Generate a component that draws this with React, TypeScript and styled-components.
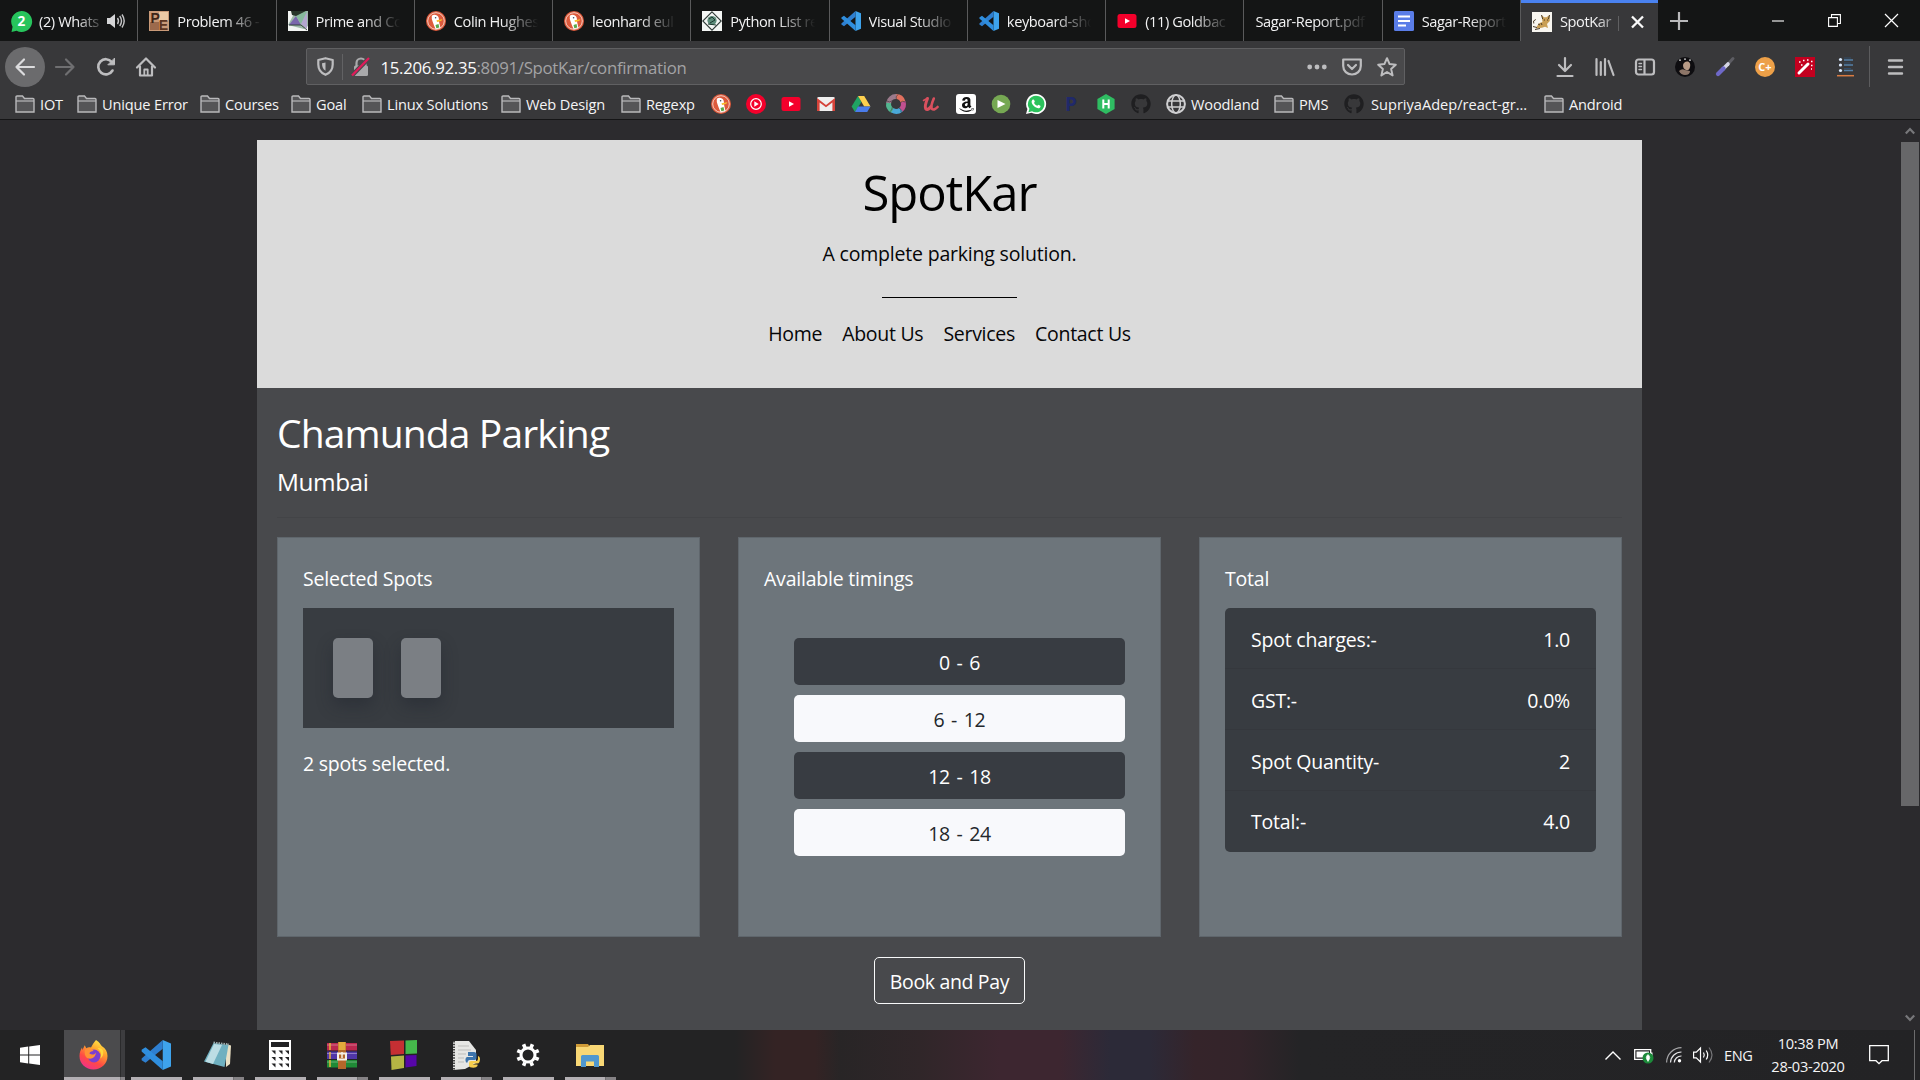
import React from "react";
import styled, { createGlobalStyle, css } from "styled-components";
import { FaGithub, FaAmazon } from "react-icons/fa";

const GlobalStyle = createGlobalStyle`
  *, *::before, *::after { box-sizing: border-box; }
  body { margin: 0; background: #2c2b2e; font-family: "Open Sans", "Noto Sans", sans-serif; overflow: hidden; }
  svg { display: block; flex: none; overflow: visible; }
  h1, h2, h3, h4, p { margin: 0; font-weight: 400; }
`;

const Screen = styled.div`
  width: 1920px;
  height: 1080px;
  display: flex;
  flex-direction: column;
  overflow: hidden;
`;

/* ---------- browser tabs ---------- */
const TabStrip = styled.div`
  height: 41px;
  flex: none;
  display: flex;
  background: #141515;
`;

const TabBox = styled.div<{ $active?: boolean }>`
  width: 138.27px;
  flex: none;
  display: flex;
  align-items: center;
  padding: 1px 12px 0 11px;
  border-right: 1px solid #5a5a5b;
  ${(p) =>
    p.$active &&
    css`
      width: 137px;
      padding: 0 14px 1px 11px;
      background: #38383a;
      border-right: 0;
      border-top: 3px solid #4a82f0;
    `}
`;

const TabIcon = styled.span`
  width: 20px;
  margin-right: 8px;
  flex: none;
`;

const TabLabel = styled.span`
  flex: 1;
  min-width: 0;
  overflow: hidden;
  white-space: nowrap;
  font-size: 14.6px;
  letter-spacing: -0.4px;
  line-height: 24px;
  padding-bottom: 1px;
  color: #f2f2f3;
  mask-image: linear-gradient(to right, #000 55%, transparent 98%);
`;

const NewTab = styled.div`
  width: 42px;
  display: flex;
  align-items: center;
  justify-content: center;
`;

const WindowControls = styled.div`
  margin-left: auto;
  display: flex;
  align-items: center;
`;

const WindowButton = styled.span`
  width: 57px;
  height: 40px;
  display: flex;
  align-items: center;
  justify-content: center;
`;

/* ---------- browser toolbar ---------- */
const Toolbar = styled.div`
  height: 51px;
  flex: none;
  display: flex;
  align-items: center;
  background: #38383a;
`;

const NavButtons = styled.div`
  width: 306px;
  display: flex;
  align-items: center;
  gap: 0.4px;
  padding-left: 5px;
`;

const NavButton = styled.span<{ $filled?: boolean }>`
  width: 40px;
  height: 40px;
  border-radius: 50%;
  display: flex;
  align-items: center;
  justify-content: center;
  background: ${(p) => (p.$filled ? "#6b6b6d" : "transparent")};
`;

const UrlBar = styled.div`
  width: 1099px;
  height: 37px;
  display: flex;
  align-items: center;
  border: 1px solid #606062;
  border-radius: 2px;
  background: #49494b;
  padding: 0 7px 0 9px;
`;

const UrlSeparator = styled.span`
  width: 1px;
  height: 26px;
  margin: 0 8px 0 7px;
  background: #626264;
`;

const Url = styled.span`
  flex: 1;
  margin-left: 9.5px;
  padding-top: 2px;
  font-size: 16.8px;
  letter-spacing: -0.3px;
  color: #a3a3a5;
  b { font-weight: 400; color: #fafafa; }
`;

const UrlActions = styled.span`
  display: flex;
  align-items: center;
  gap: 15px;
`;

const Extensions = styled.div`
  display: flex;
  align-items: center;
  padding-left: 140px;
`;

const ExtensionSlot = styled.span`
  width: 40px;
  display: flex;
  justify-content: center;
`;

const ToolbarDivider = styled.span`
  width: 1px;
  height: 41px;
  margin: 0 11px 0 4px;
  background: #5c5c5e;
`;

/* ---------- bookmarks ---------- */
const Bookmarks = styled.div`
  height: 28px;
  flex: none;
  display: flex;
  align-items: center;
  gap: 15px;
  padding: 0 0 3px 15px;
  background: #38383a;
  border-bottom: 1px solid #151516;
`;

const Bookmark = styled.span`
  display: flex;
  align-items: center;
  gap: 5px;
`;

const BookmarkLabel = styled.span<{ $w: number; $wide?: boolean }>`
  width: ${(p) => p.$w}px;
  padding-left: ${(p) => (p.$wide ? 2 : 0)}px;
  white-space: nowrap;
  font-size: 14.6px;
  letter-spacing: ${(p) => (p.$wide ? 0 : -0.17)}px;
  line-height: 24px;
  padding-bottom: 1px;
  color: #f4f4f5;
`;

const Glyph = styled.span<{ $bg?: string; $fg?: string; $round?: string; $size?: number }>`
  width: 20px;
  height: 20px;
  display: flex;
  align-items: center;
  justify-content: center;
  border-radius: ${(p) => p.$round ?? "0"};
  background: ${(p) => p.$bg ?? "transparent"};
  color: ${(p) => p.$fg ?? "#fff"};
  font: 700 ${(p) => p.$size ?? 14}px/20px "Open Sans", sans-serif;
`;

/* ---------- page ---------- */
const Viewport = styled.div`
  height: 910px;
  flex: none;
  display: flex;
  background: #2c2b2e;
`;

const PageArea = styled.div`
  width: 1900px;
  padding: 20px 0 0 257px;
  overflow: hidden;
`;

const Container = styled.div`
  width: 1385px;
  height: 890px;
  background: #48494c;
`;

const Header = styled.header`
  height: 248px;
  background: #dbdbdb;
  color: #060608;
  display: flex;
  flex-direction: column;
  align-items: center;
  padding-top: 22px;
`;

const BrandTitle = styled.h1`
  font-size: 49px;
  line-height: 60px;
  letter-spacing: -1px;
  color: #000;
`;

const Tagline = styled.p`
  margin-top: 17px;
  font-size: 19.5px;
  line-height: 30px;
  letter-spacing: -0.2px;
`;

const ShortRule = styled.div`
  width: 135px;
  height: 1px;
  margin-top: 28px;
  background: #000;
`;

const Menu = styled.nav`
  display: flex;
  gap: 20px;
  margin-top: 21px;
  font-size: 19.5px;
  line-height: 30px;
  letter-spacing: -0.28px;
`;

const Content = styled.main`
  padding: 21px 20px 0;
  color: #fff;
`;

const PlaceName = styled.h2`
  font-size: 39px;
  line-height: 48px;
  letter-spacing: -0.88px;
`;

const City = styled.h4`
  margin-top: 10px;
  font-size: 24.4px;
  line-height: 30px;
  letter-spacing: -0.45px;
`;

const Rule = styled.div`
  height: 1px;
  margin: 20px 0 19px;
  background: #434447;
`;

const Cards = styled.div`
  display: flex;
  justify-content: space-between;
`;

const Card = styled.section`
  width: 423px;
  height: 400px;
  padding: 26px 25px 0;
  border: 1px solid #5f666c;
  background: #6d757b;
  font-size: 19.5px;
  line-height: 30px;
  letter-spacing: -0.22px;
`;

const CardTitle = styled.h3`
  font-size: inherit;
  margin-bottom: 14px;
`;

const SpotTray = styled.div`
  height: 120px;
  display: flex;
  gap: 28px;
  padding: 30px;
  margin-bottom: 21px;
  background: #383c41;
`;

const Spot = styled.span`
  width: 40px;
  height: 60px;
  border-radius: 5px;
  background: #7b7f84;
  box-shadow: 0 8px 16px rgba(30, 34, 44, 0.4);
`;

const Timings = styled.div`
  display: flex;
  flex-direction: column;
  gap: 10px;
  padding: 30px 10px 30px 30px;
`;

const Timing = styled.div<{ $light?: boolean }>`
  height: 47px;
  padding-top: 2px;
  display: flex;
  align-items: center;
  justify-content: center;
  border-radius: 5px;
  background: ${(p) => (p.$light ? "#f8f9fc" : "#383c42")};
  color: ${(p) => (p.$light ? "#23272b" : "#fff")};
  word-spacing: 2px;
  letter-spacing: -0.35px;
`;

const Bill = styled.div`
  border-radius: 5px;
  overflow: hidden;
  background: #383c41;
`;

const BillRow = styled.div`
  height: 61px;
  display: flex;
  align-items: center;
  justify-content: space-between;
  padding: 3px 26px 0;
  border-bottom: 1px solid #35383d;
  &:last-child { border-bottom: 0; padding-top: 0; }
`;

const PayRow = styled.div`
  display: flex;
  justify-content: center;
  padding-top: 20px;
`;

const PayButton = styled.div`
  width: 151px;
  height: 47px;
  padding-top: 2px;
  display: flex;
  align-items: center;
  justify-content: center;
  border: 1px solid #f8f9fa;
  border-radius: 5px;
  font-size: 19.5px;
  letter-spacing: -0.35px;
`;

const Scrollbar = styled.div`
  width: 20px;
  display: flex;
  flex-direction: column;
  align-items: center;
  background: #2b2a2d;
`;

const ScrollArrow = styled.span`
  height: 22px;
  display: flex;
  align-items: center;
  &:last-child { height: 24px; }
`;

const ScrollThumb = styled.span`
  width: 18px;
  height: 664px;
  margin: 0 1px auto 0;
  background: #676769;
`;

/* ---------- taskbar ---------- */
const Taskbar = styled.div`
  height: 50px;
  flex: none;
  display: flex;
  background: linear-gradient(
    to right,
    #232324 0, #232324 735px, #342324 775px, #342324 815px, #282526 840px,
    #302629 920px, #3d2630 1000px, #3d2630 1060px, #2c2a38 1110px, #2c2a38 1150px,
    #35242a 1195px, #33242a 1240px, #242426 1300px, #232325 1920px
  );
`;

const StartButton = styled.span`
  width: 64px;
  display: flex;
  align-items: center;
  padding-left: 20px;
`;

const Task = styled.span<{ $active?: boolean; $stack?: boolean }>`
  width: ${(p) => (p.$active ? 61 : 51)}px;
  margin-right: ${(p) => (p.$active ? 6 : 11)}px;
  display: flex;
  flex-direction: column;
  align-items: center;
  justify-content: space-between;
  padding-top: 9px;
  background: ${(p) => (p.$active ? "linear-gradient(to right, #4b4b4d 56px, #2b2b2c 56px, #2b2b2c 57px, #3d3d3f 57px)" : "none")};
  &::after {
    content: "";
    width: 100%;
    height: 3px;
    background: ${(p) =>
      p.$active
        ? "linear-gradient(to right, #b3afb3 56px, #5e5c5e 56px, #8a878a 57px)"
        : p.$stack
          ? "linear-gradient(to right, #b3afb3 40px, #5e5c5e 40px, #858285 41px)"
          : "#b3afb3"};
  }
`;

const TaskIcon = styled.span`
  height: 32px;
  margin-right: 2px;
  display: flex;
  align-items: center;
`;

const Tray = styled.div`
  margin-left: auto;
  display: flex;
  align-items: center;
  color: #f5f5f6;
`;

const TraySlot = styled.span<{ $w: number }>`
  width: ${(p) => p.$w}px;
  display: flex;
  justify-content: center;
`;

const Language = styled.span`
  width: 30px;
  margin: 0 14px 0 7px;
  font-size: 14.6px;
  letter-spacing: -0.45px;
`;

const Clock = styled.div`
  width: 80px;
  display: flex;
  flex-direction: column;
  align-items: center;
  font-size: 14.6px;
  letter-spacing: -0.28px;
  line-height: 23px;
  white-space: nowrap;
`;

const ShowDesktop = styled.span`
  width: 6px;
  height: 50px;
  margin-left: 5px;
  border-left: 1px solid #6b6b6c;
`;

/* ---------- drawings ---------- */
const stroke = { fill: "none", stroke: "#bdbdbf", strokeWidth: 2.2, strokeLinecap: "round" as const, strokeLinejoin: "round" as const };

const Folder = () => (
  <svg width="20" height="20" viewBox="0 0 20 20">
    <path d="M1 18V3q0-1 1-1h5.500l2 2.500H18q1 0 1 1V18z" fill="#555557" stroke="#b9b9bb" strokeWidth="1.400" />
    <path d="M1 7h18" stroke="#b9b9bb" strokeWidth="1.200" />
  </svg>
);

const Duck = () => (
  <svg width="20" height="20" viewBox="0 0 20 20">
    <circle cx="10" cy="10" r="10" fill="#dd5a3c" />
    <circle cx="10" cy="10" r="8.300" fill="none" stroke="#f6d9cf" strokeWidth=".9" />
    <path d="M5.800 4.800c2-1.800 5.800-1 6.800 1.600.6 1.600.2 3.200.6 5.200l1.300 5.400-4.800 1.200C8 14.800 6.600 10.500 5.800 8z" fill="#fff" />
    <path d="M10.500 9.200l5.500-1c.8.7-.4 1.900-5 2.700z" fill="#f9bf2d" />
    <path d="M9.500 14l3-1 .8 3.500-3 .7z" fill="#5aa84a" />
    <circle cx="9.600" cy="6.800" r=".8" fill="#3b4a66" />
  </svg>
);

const YouTube = () => (
  <svg width="20" height="20" viewBox="0 0 20 20">
    <rect x="0.500" y="3" width="19" height="14" rx="2.500" fill="#f4002b" />
    <path d="M8 7.200v5.600l5-2.800z" fill="#fff" />
  </svg>
);

const YouTubeMusic = () => (
  <svg width="20" height="20" viewBox="0 0 20 20">
    <circle cx="10" cy="10" r="10" fill="#f4002b" />
    <circle cx="10" cy="10" r="5.300" fill="none" stroke="#fff" strokeWidth="1.200" />
    <path d="M8.300 7.300v5.400l4.400-2.700z" fill="#fff" />
  </svg>
);

const Gmail = () => (
  <svg width="20" height="20" viewBox="0 0 20 20">
    <rect x="1" y="3" width="18" height="14" rx="1.500" fill="#efefef" />
    <path d="M1 17V4l9 7 9-7v13h-2.600V8.500L10 13.300 3.600 8.500V17z" fill="#d5433a" />
  </svg>
);

const Drive = () => (
  <svg width="20" height="20" viewBox="0 0 20 20">
    <path d="M7 2l3.400 6L4 18 .6 12.500z" fill="#1fa463" />
    <path d="M7 2h6.200l6.300 10.500h-6.300z" fill="#fdd04f" />
    <path d="M7 12.500h12.500L16.200 18H4z" fill="#4a7cea" />
  </svg>
);

const Swirl = () => (
  <svg width="20" height="20" viewBox="0 0 20 20" fill="none" strokeWidth="5">
    <path d="M10 2.600A7.400 7.400 0 0 1 17 8" stroke="#e0705e" />
    <path d="M17 7.700a7.400 7.400 0 0 1-2.400 8.200" stroke="#c0508f" />
    <path d="M15 15.600a7.400 7.400 0 0 1-8.800.6" stroke="#4aa8d8" />
    <path d="M6.500 16.500A7.400 7.400 0 0 1 2.700 8.600" stroke="#52b690" />
    <path d="M2.600 9A7.400 7.400 0 0 1 10.300 2.600" stroke="#9c7a8c" />
    <path d="M12 .5q-3 2-1.500 5.500M19 8q-3-2-5 1M15 18q1-3-2-4M4 17.500q2.500-1 2.200-4.200M1 7q3 2 4.800-.2" stroke="#38383a" strokeWidth=".6" />
  </svg>
);

const Udemy = () => (
  <svg width="20" height="20" viewBox="0 0 20 20" fill="none" stroke="#d9505e" strokeLinecap="round" strokeLinejoin="round">
    <path d="M6.500 4.500Q3.500 12 4.600 14.500 6.500 17 10 12.500" strokeWidth="3" />
    <path d="M12.800 4.500Q9.600 12 10.600 14.500q2.400 2.500 6-1.500" strokeWidth="2.600" />
    <path d="M2.500 6.500L6 4.300" strokeWidth="1.500" />
  </svg>
);

const PlayStore = () => (
  <svg width="20" height="20" viewBox="0 0 20 20">
    <circle cx="10" cy="10" r="9.300" fill="#76a853" />
    <path d="M6.500 6v8l8-4z" fill="#fff" />
  </svg>
);

const WhatsApp = () => (
  <svg width="20" height="20" viewBox="0 0 20 20">
    <path d="M10 0a10 10 0 1 1-4.600 18.800L0 20l1.400-5A10 10 0 0 1 10 0z" fill="#fff" />
    <path d="M10 1.700a8.300 8.300 0 1 1-4 15.500l-3.600 1 1-3.500A8.300 8.300 0 0 1 10 1.700z" fill="#2bc25c" />
    <path d="M7 5.500c.5-.2 1 0 1.100.4l.7 1.600c.1.500-.7 1-.7 1.400.7 1.400 1.700 2.300 3.100 2.800.5.100.9-.9 1.300-.9l1.800.9c.5.300.1 1.700-.7 2.200-1.200.7-3 .2-4.600-.8C7 11.500 5.700 9.600 5.600 8c0-1.200.6-2.200 1.400-2.500z" fill="#fff" />
  </svg>
);

const WhatsAppUnread = () => (
  <svg width="21" height="21" viewBox="0 0 20 20">
    <path d="M10 0a10 10 0 1 1-4.600 18.800L.5 20l1-5A10 10 0 0 1 10 0z" fill="#27c45c" />
    <text x="10" y="14.600" textAnchor="middle" fontSize="13" fontWeight="700" fill="#fff" fontFamily="Open Sans">2</text>
  </svg>
);

const HackerRank = () => (
  <svg width="20" height="20" viewBox="0 0 20 20">
    <path d="M10 0l8.600 5v10L10 20l-8.600-5V5z" fill="#2fbd62" />
    <path d="M7.300 5.500v9M12.700 5.500v9M7.300 10h5.400" stroke="#fff" strokeWidth="2" />
  </svg>
);

const Globe = () => (
  <svg width="20" height="20" viewBox="0 0 20 20" fill="none" stroke="#cfcfd1" strokeWidth="1.500">
    <circle cx="10" cy="10" r="8.900" strokeWidth="2" />
    <ellipse cx="10" cy="10" rx="4.300" ry="8.900" />
    <path d="M1.500 7h17M1.500 13h17" />
  </svg>
);

const VsCode = ({ size = 20 }: { size?: number }) => (
  <svg width={size} height={size} viewBox="0 0 20 20">
    <path d="M14.500 0L20 2.300v15.400L14.500 20z" fill="#3ea3ec" />
    <path d="M14.500 0v5.800L3 15.200.4 13.500v-1.100z" fill="#2e7fd0" />
    <path d="M14.500 20v-5.800L3 4.800.4 6.500v1.100z" fill="#2f8ede" />
  </svg>
);

const Euler = () => (
  <svg width="20" height="20" viewBox="0 0 20 20">
    <rect width="20" height="20" fill="#c99a78" />
    <rect x="10" y="1" width="9" height="9" fill="#ecc9a4" />
    <rect x="1" y="11" width="9" height="8" fill="#9c6a4c" />
    <text x="1.500" y="12" fontSize="14" fontWeight="700" fill="#3c2418" fontFamily="Liberation Sans">P</text>
    <text x="9.800" y="18.500" fontSize="14" fontWeight="700" fill="#5c3420" fontFamily="Liberation Sans">E</text>
  </svg>
);

const Polygon = () => (
  <svg width="20" height="20" viewBox="0 0 20 20">
    <rect width="20" height="20" fill="#f2f4f2" />
    <path d="M0 14L7 1l13-1v15l-4 3z" fill="#9db8a8" />
    <path d="M1 14L8 5l5 9z" fill="#7a66ac" />
    <path d="M8 5l11-5-6 13z" fill="#86b99c" />
    <path d="M13 13l6-12v17z" fill="#b3a6cf" />
    <path d="M3 0h15L8 5 4 4z" fill="#28362a" />
    <path d="M1 14h12l6 5" stroke="#2e3a34" fill="none" strokeWidth=".9" />
  </svg>
);

const PythonDiamond = () => (
  <svg width="20" height="20" viewBox="0 0 20 20">
    <rect width="20" height="20" fill="#f4f6f4" />
    <path d="M10 .8L19.200 10 10 19.200.8 10z" fill="none" stroke="#2f3a36" strokeWidth="1.100" />
    <circle cx="10" cy="9.500" r="4.600" fill="#5d8c7a" />
    <path d="M7 8l3-2 3 3-5 3M6 13l8 1" stroke="#1d3a30" fill="none" />
  </svg>
);

const Docs = () => (
  <svg width="20" height="20" viewBox="0 0 20 20">
    <rect width="20" height="20" rx="1.500" fill="#5a7de8" />
    <path d="M4 5.500h12M4 10h12M4 14.600h8" stroke="#fff" strokeWidth="2" />
  </svg>
);

const Tomcat = () => (
  <svg width="20" height="20" viewBox="0 0 20 20">
    <rect width="20" height="20" fill="#f8f6f0" />
    <path d="M9.500 3l2.500 2.300h2.500L17.500 3l.3 6-2.800 3 1 4-3-1.200-3 .9-6 .8 1.500-3 2-2.500 3-1z" fill="#c99f55" />
    <path d="M1.800 11.500q-1.500-3 2-4M1 14.500l4 1M11.800 8h1.200M15 8h1.200M9.500 3l1.200 4M3 17.500l5-1M17.500 3l-1 4M6 12l2 1M9 11l1 2" stroke="#4a3b28" fill="none" strokeWidth="1" />
  </svg>
);

const Audio = () => (
  <svg width="18" height="16" viewBox="0 0 18 16">
    <path d="M0 5h3l5-4v14l-5-4H0z" fill="#d5d5d7" />
    <path d="M10.500 5q2 3 0 6M12.700 3q3.600 5 0 10M15 1.500q4.400 6.500 0 13" fill="none" stroke="#c4c4c6" strokeWidth="1.400" />
  </svg>
);

const Firefox = () => (
  <svg width="29" height="30" viewBox="0 0 29 30">
    <defs>
      <linearGradient id="ffBody" x1=".8" y1="0" x2=".3" y2="1">
        <stop offset="0" stopColor="#fff04a" /><stop offset=".35" stopColor="#ffa42c" />
        <stop offset=".7" stopColor="#ff4a45" /><stop offset="1" stopColor="#f0308c" />
      </linearGradient>
    </defs>
    <path d="M17 0c4 2.500 4.600 5 6 6.300 3.500 2 5.500 5.500 5.500 9.700C28.500 24 22 29.500 14.500 29.500S.500 24 .500 16c0-3.500 1.200-6.600 2.500-8.600L3.500 10l2.200-4.800 1.600 3c1.700-1 3-1 4.700-.6C13.500 4.500 15 2.500 17 0z" fill="url(#ffBody)" />
    <circle cx="15" cy="16" r="6.400" fill="#7b3fd0" />
    <path d="M6 9.500c4-1.800 6.500-.8 8.700 1.500-2.500.3-4 1-4.300 2.500 3 2 5.500 1 6.600-1-.5 5-4.500 7.500-9 5.500C6 16.500 5 13 6 9.500z" fill="#ff9135" />
    <path d="M18.500 8c3.500 3 4.500 7 2.700 10.500 2-1 3.500-3.500 3-7.500-1-2.500-3-3.500-5.700-3z" fill="#ffd93c" />
  </svg>
);

const Notepad = () => (
  <svg width="28" height="28" viewBox="0 0 28 28">
    <path d="M22 3l5 1.500-1 18.500-4 3z" fill="#e9e0c4" />
    <path d="M9.500 2L24.500 4l-4 22L0 20.500z" fill="#6fb0c0" />
    <path d="M10 3l8 1L9 23l-7.500-2.300z" fill="#bcdde4" />
    <path d="M9.500 1.600L25 3.400" stroke="#9fb0b2" strokeWidth="2" strokeDasharray="1.500 1" />
  </svg>
);

const Calculator = () => (
  <svg width="22" height="30" viewBox="0 0 22 30">
    <path d="M0 0h22v30H0z" fill="#fff" />
    <path d="M2 2h18v5H2z" fill="#222224" />
    {[10.5, 17, 23.5].map((y) => [2.5, 9.5, 16].map((x) => <path key={`${x}-${y}`} d={`M${x} ${y}h4v4z`} fill="#222224" />))}
  </svg>
);

const WinRar = () => (
  <svg width="30" height="27" viewBox="0 0 30 27">
    <path d="M0 1h30v7.500H0z" fill="#b9284f" /><path d="M0 9.500h30V17H0z" fill="#5036a8" /><path d="M0 18h30v7.500H0z" fill="#1f8a36" />
    <path d="M0 3h30M0 11.500h30M0 20h30" stroke="#fff" strokeOpacity=".35" />
    <path d="M3 1v7M3 10v7M3 18v7" stroke="#e8b53b" strokeWidth="1.500" />
    <path d="M11 0h8v27h-8z" fill="#b4672a" /><path d="M11.500 0h7v8h-7z" fill="#e3aa3c" />
    <path d="M11 11.500h8v6h-8z" fill="none" stroke="#f4f0e8" strokeWidth="2" /><path d="M15 10v6" stroke="#f4f0e8" strokeWidth="1.500" />
  </svg>
);

const FourColors = () => (
  <svg width="27" height="30" viewBox="0 0 27 30">
    <path d="M0 1l14-.5V14L.8 15z" fill="#c62f33" /><path d="M15.500.5L27 0v13.500l-11.500.5z" fill="#45b84b" />
    <path d="M1 16.500l13-1V28L1.500 30z" fill="#b5b544" /><path d="M15.500 15.500L26.500 15v11l-11 1.500z" fill="#5706a8" />
  </svg>
);

const PythonFile = () => (
  <svg width="28" height="29" viewBox="0 0 28 29">
    <path d="M1 0h16l7 9v13L13 28 1 29z" fill="#e6e6e4" />
    <path d="M2 0v29" stroke="#444" strokeWidth="2" strokeDasharray="1.500 1.200" />
    <path d="M6 5h11M6 9h13M6 13h8M6 17h6M6 21h6" stroke="#bdbdbb" />
    <path d="M16 11h6q2.500 0 2.500 2.500V17q0 2-2 2h-5q-2 0-2 2.500H14q-1.500-4.500 1-5.500h6v-1h-5z" fill="#3d74ab" />
    <path d="M26 15q3 1 1.500 6-.6 1.500-2.500 1.500h-4v1h4.500V25q-1 1.800-4 1.800-4.500 0-4.500-2.500V22q0-2 2-2h5q2 0 2-2z" fill="#f8cf4e" />
  </svg>
);

const Gear = () => (
  <svg width="24" height="24" viewBox="0 0 24 24" fill="none" stroke="#fff">
    <circle cx="12" cy="12" r="7" strokeWidth="3" />
    {[22.5, 67.5, 112.5, 157.5, 202.5, 247.5, 292.5, 337.5].map((a) => (
      <path key={a} d="M12 4V.4" strokeWidth="3.600" transform={`rotate(${a} 12 12)`} />
    ))}
  </svg>
);

const Explorer = () => (
  <svg width="28" height="24" viewBox="0 0 28 24">
    <path d="M0 1h12l2 3v4H0z" fill="#cf9b38" />
    <path d="M0 4h12l2-2h14v21H0z" fill="#f8d775" />
    <path d="M5 24V13.500Q5 12 6.500 12h15q1.500 0 1.500 1.500V24h-5v-5.500h-8V24z" fill="#4f97cf" />
  </svg>
);

/* ---------- data ---------- */
const tabs: { label: string; icon?: React.ReactNode; audio?: boolean }[] = [
  { label: "(2) Whats", icon: <WhatsAppUnread />, audio: true },
  { label: "Problem 46 -", icon: <Euler /> },
  { label: "Prime and Co", icon: <Polygon /> },
  { label: "Colin Hughes", icon: <Duck /> },
  { label: "leonhard eul", icon: <Duck /> },
  { label: "Python List re", icon: <PythonDiamond /> },
  { label: "Visual Studio", icon: <VsCode /> },
  { label: "keyboard-sho", icon: <VsCode /> },
  { label: "(11) Goldbac", icon: <YouTube /> },
  { label: "Sagar-Report.pdf" },
  { label: "Sagar-Report", icon: <Docs /> },
];

const bookmarks: { icon: React.ReactNode; label?: string; w?: number; wide?: boolean }[] = [
  { icon: <Folder />, label: "IOT", w: 22 },
  { icon: <Folder />, label: "Unique Error", w: 83 },
  { icon: <Folder />, label: "Courses", w: 51 },
  { icon: <Folder />, label: "Goal", w: 31 },
  { icon: <Folder />, label: "Linux Solutions", w: 99 },
  { icon: <Folder />, label: "Web Design", w: 80 },
  { icon: <Folder />, label: "Regexp", w: 50 },
  { icon: <Duck /> },
  { icon: <YouTubeMusic /> },
  { icon: <YouTube /> },
  { icon: <Gmail /> },
  { icon: <Drive /> },
  { icon: <Swirl /> },
  { icon: <Udemy /> },
  { icon: <Glyph $bg="#fff" $fg="#111" $round="3px"><FaAmazon size={17} /></Glyph> },
  { icon: <PlayStore /> },
  { icon: <WhatsApp /> },
  { icon: <Glyph $fg="#20296a" $size={19}>P</Glyph> },
  { icon: <HackerRank /> },
  { icon: <FaGithub size={20} color="#1f1f21" /> },
  { icon: <Globe />, label: "Woodland", w: 68 },
  { icon: <Folder />, label: "PMS", w: 30 },
  { icon: <FaGithub size={20} color="#1f1f21" />, label: "SupriyaAdep/react-gr...", w: 160, wide: true },
  { icon: <Folder />, label: "Android", w: 53 },
];

const timings = ["0 - 6", "6 - 12", "12 - 18", "18 - 24"];
const bill = [
  ["Spot charges:-", "1.0"],
  ["GST:-", "0.0%"],
  ["Spot Quantity-", "2"],
  ["Total:-", "4.0"],
];
const tasks = [
  { icon: <Firefox />, active: true },
  { icon: <VsCode size={30} /> },
  { icon: <Notepad />, stack: true },
  { icon: <Calculator /> },
  { icon: <WinRar />, stack: true },
  { icon: <FourColors /> },
  { icon: <PythonFile />, stack: true },
  { icon: <Gear /> },
  { icon: <Explorer />, stack: true },
];

export default function App() {
  return (
    <Screen>
      <GlobalStyle />
      <TabStrip>
        {tabs.map((t) => (
          <TabBox key={t.label}>
            {t.icon && <TabIcon>{t.icon}</TabIcon>}
            <TabLabel>{t.label}</TabLabel>
            {t.audio && <Audio />}
          </TabBox>
        ))}
        <TabBox $active>
          <TabIcon><Tomcat /></TabIcon>
          <TabLabel>SpotKar |</TabLabel>
          <svg width="18" height="14" viewBox="0 0 18 14"><path d="M6 1.500l11 11M17 1.500l-11 11" stroke="#fafafa" strokeWidth="2.300" /></svg>
        </TabBox>
        <NewTab>
          <svg width="18" height="18" viewBox="0 0 18 18"><path d="M9 0v18M0 9h18" stroke="#b9b9bb" strokeWidth="2.200" /></svg>
        </NewTab>
        <WindowControls>
          <WindowButton><svg width="12" height="12" viewBox="0 0 12 12"><path d="M0 6h12" stroke="#fff" strokeWidth="1.100" /></svg></WindowButton>
          <WindowButton>
            <svg width="13" height="13" viewBox="0 0 13 13" fill="none" stroke="#fff" strokeWidth="1.100"><path d="M.6 3.600h8.800v8.800H.6zM3.500 3.600V.6h8.900v8.900h-3" /></svg>
          </WindowButton>
          <WindowButton><svg width="13" height="13" viewBox="0 0 13 13"><path d="M0 0l13 13M13 0L0 13" stroke="#fff" strokeWidth="1.200" /></svg></WindowButton>
        </WindowControls>
      </TabStrip>

      <Toolbar>
        <NavButtons>
          <NavButton $filled><svg width="20" height="20" viewBox="0 0 20 20" {...stroke} stroke="#dcdcde"><path d="M19 10H1.500M9 2.500L1.500 10 9 17.500" /></svg></NavButton>
          <NavButton><svg width="20" height="20" viewBox="0 0 20 20" {...stroke} stroke="#6f6f71"><path d="M1 10h17.500M11 2.500l7.500 7.500-7.500 7.500" /></svg></NavButton>
          <NavButton>
            <svg width="20" height="20" viewBox="0 0 20 20" {...stroke} strokeWidth="2.600"><path d="M16.500 13.500a7.600 7.600 0 1 1-.7-8.500" /><path d="M18.500 1.500v6.300h-6.300z" fill="#bdbdbf" strokeWidth="1" /></svg>
          </NavButton>
          <NavButton>
            <svg width="20" height="20" viewBox="0 0 20 20" {...stroke}><path d="M1 10.500L10 1.500l9 9M4 9.500v9h12v-9" /><path d="M8.300 18v-5.500h3.400V18" strokeWidth="1.800" /></svg>
          </NavButton>
        </NavButtons>
        <UrlBar>
          <svg width="19" height="19" viewBox="0 0 19 19" {...stroke}><path d="M9.500 1.200L2.300 3v4.500c0 5 2.700 8.500 7.200 10.300 4.500-1.800 7.200-5.300 7.200-10.300V3z" /><path d="M9.500 5.500v8.300C7 12.300 6 10 6 6.300z" fill="#bdbdbf" stroke="none" /></svg>
          <UrlSeparator />
          <svg width="20" height="20" viewBox="0 0 20 20"><path d="M5.500 9V6a4.500 4.500 0 0 1 9 0v3" fill="none" stroke="#a9a9ab" strokeWidth="2.200" /><rect x="3" y="8.500" width="14" height="10.500" rx="1.500" fill="#a9a9ab" /><path d="M1 18.500L18 1" stroke="#49494b" strokeWidth="4.500" /><path d="M1 18.500L18 1" stroke="#e01b5a" strokeWidth="2.300" /></svg>
          <Url><b>15.206.92.35</b>:8091/SpotKar/confirmation</Url>
          <UrlActions>
            <svg width="20" height="20" viewBox="0 0 20 20" fill="#bdbdbf"><circle cx="2.700" cy="10" r="2.400" /><circle cx="10" cy="10" r="2.400" /><circle cx="17.300" cy="10" r="2.400" /></svg>
            <svg width="20" height="20" viewBox="0 0 20 20" {...stroke}><path d="M1.200 2.500h17.600v6.500c0 5-4 8.500-8.800 8.500S1.200 14 1.200 9z" /><path d="M6 8l4 4 4-4" /></svg>
            <svg width="20" height="20" viewBox="0 0 20 20" {...stroke} strokeWidth="2"><path d="M10 1.200l2.600 5.900 6.200.6-4.700 4.200 1.500 6.500L10 15l-5.600 3.400 1.500-6.500L1.200 7.700l6.200-.6z" /></svg>
          </UrlActions>
        </UrlBar>
        <Extensions>
          <ExtensionSlot><svg width="18" height="20" viewBox="0 0 18 20" {...stroke}><path d="M9 1v12.500M3 8l6 6 6-6M1.500 19h15" /></svg></ExtensionSlot>
          <ExtensionSlot><svg width="20" height="18" viewBox="0 0 20 18" {...stroke}><path d="M1.500 1v16M5.800 4v13M10 1v16M13.500 3l5 14" /></svg></ExtensionSlot>
          <ExtensionSlot><svg width="20" height="18" viewBox="0 0 20 18" {...stroke}><rect x="1" y="1.500" width="18" height="15" rx="2.500" /><path d="M9.500 2v14" /><path d="M4 5.500h2.500M4 8.500h2.500M4 11.500h2.500" strokeWidth="1.400" /></svg></ExtensionSlot>
          <ExtensionSlot>
            <svg width="20" height="20" viewBox="0 0 20 20"><circle cx="10" cy="10" r="10" fill="#0e0d10" /><path d="M8 8q1-4 5-3.500 3 1 2 5.500-1 4-4 3-3-1-3-5z" fill="#b79a86" /><path d="M4 14q3-3 6-1l5 1q0 4-5 4-4 0-6-4z" fill="#8d7668" /><path d="M4 3.200h2M9 2.200h2M14 3.200h2" stroke="#ccc" strokeWidth="1.200" /></svg>
          </ExtensionSlot>
          <ExtensionSlot>
            <svg width="18" height="18" viewBox="0 0 18 18" strokeLinecap="round"><path d="M17 .5l-5 5.500" stroke="#5d5d63" strokeWidth="3" /><path d="M12 6L7 11" stroke="#d5d5e4" strokeWidth="3.600" /><path d="M7.500 10.500L2 16" stroke="#6e68c8" strokeWidth="4.200" /></svg>
          </ExtensionSlot>
          <ExtensionSlot><Glyph $bg="#eda048" $round="50%" $size={11}>C+</Glyph></ExtensionSlot>
          <ExtensionSlot>
            <svg width="20" height="20" viewBox="0 0 20 20"><path d="M0 0h20v20H0z" fill="#c3001f" /><path d="M4 16l9-9" stroke="#fff" strokeWidth="3" strokeLinecap="round" /><path d="M4 5h1.500M8 3.500h1.500M12 3h1.500M16 4.500h1.500M16 8.500h1.500M6 8h1.500M16 12h1" stroke="#fff" strokeWidth="1.300" /></svg>
          </ExtensionSlot>
          <ExtensionSlot>
            <svg width="17" height="20" viewBox="0 0 17 20"><path d="M7 3h9M7 8h9M7 13.500h9" stroke="#5480a8" strokeWidth="1.500" /><path d="M7 1h7M7 6h7M7 11.500h7" stroke="#304a66" /><circle cx="3.500" cy="2.500" r="1.600" fill="#dcebff" /><circle cx="3.500" cy="8" r="1.600" fill="#dcebff" /><circle cx="3.500" cy="13.500" r="1.600" fill="#dcebff" /><path d="M0 18.700h17" stroke="#d97b42" strokeWidth="1.500" /></svg>
          </ExtensionSlot>
          <ToolbarDivider />
          <svg width="30" height="18" viewBox="0 0 30 18" {...stroke} strokeWidth="2.400"><path d="M8 2.500h13M8 9h13M8 15.500h13" /></svg>
        </Extensions>
      </Toolbar>

      <Bookmarks>
        {bookmarks.map((b, i) => (
          <Bookmark key={i}>
            {b.icon}
            {b.label && <BookmarkLabel $w={b.w ?? 0} $wide={b.wide}>{b.label}</BookmarkLabel>}
          </Bookmark>
        ))}
      </Bookmarks>

      <Viewport>
        <PageArea>
          <Container>
            <Header>
              <BrandTitle>SpotKar</BrandTitle>
              <Tagline>A complete parking solution.</Tagline>
              <ShortRule />
              <Menu>
                <span>Home</span><span>About Us</span><span>Services</span><span>Contact Us</span>
              </Menu>
            </Header>
            <Content>
              <PlaceName>Chamunda Parking</PlaceName>
              <City>Mumbai</City>
              <Rule />
              <Cards>
                <Card>
                  <CardTitle>Selected Spots</CardTitle>
                  <SpotTray><Spot /><Spot /></SpotTray>
                  <p>2 spots selected.</p>
                </Card>
                <Card>
                  <CardTitle>Available timings</CardTitle>
                  <Timings>
                    {timings.map((t, i) => <Timing key={t} $light={i % 2 === 1}>{t}</Timing>)}
                  </Timings>
                </Card>
                <Card>
                  <CardTitle>Total</CardTitle>
                  <Bill>
                    {bill.map(([name, value]) => (
                      <BillRow key={name}><span>{name}</span><span>{value}</span></BillRow>
                    ))}
                  </Bill>
                </Card>
              </Cards>
              <PayRow><PayButton>Book and Pay</PayButton></PayRow>
            </Content>
          </Container>
        </PageArea>
        <Scrollbar>
          <ScrollArrow><svg width="10" height="8" viewBox="0 0 10 8"><path d="M.8 6.500L5 2l4.200 4.500" fill="none" stroke="#77777a" strokeWidth="2.200" /></svg></ScrollArrow>
          <ScrollThumb />
          <ScrollArrow><svg width="10" height="8" viewBox="0 0 10 8"><path d="M.8 1.500L5 6l4.200-4.500" fill="none" stroke="#77777a" strokeWidth="2.200" /></svg></ScrollArrow>
        </Scrollbar>
      </Viewport>

      <Taskbar>
        <StartButton>
          <svg width="20" height="20" viewBox="0 0 20 20" fill="#fff"><path d="M0 2.800L8.200 1.600v7.900H0zM9.200 1.500L20 0v9.500H9.200zM0 10.500h8.200v7.900L0 17.200zM9.200 10.500H20V20L9.200 18.500z" /></svg>
        </StartButton>
        {tasks.map((t, i) => (
          <Task key={i} $active={t.active} $stack={t.stack}><TaskIcon>{t.icon}</TaskIcon></Task>
        ))}
        <Tray>
          <TraySlot $w={32}><svg width="16" height="9" viewBox="0 0 16 9"><path d="M.5 8.500L8 1l7.500 7.500" fill="none" stroke="#fff" strokeWidth="1.400" /></svg></TraySlot>
          <TraySlot $w={29}>
            <svg width="19" height="16" viewBox="0 0 19 16"><path d="M.7 2.700h16v9.600H.7z" fill="none" stroke="#fff" strokeWidth="1.300" /><path d="M2.500 4.500h12.500v6H2.500z" fill="#fff" /><path d="M17 5.500h1.500v4H17z" fill="#fff" /><circle cx="14" cy="11" r="5.500" fill="#1c8a3a" /><path d="M14 7.500q3.500 3 0 6.500-3.500-3.500 0-6.500zM14 11v4" fill="#fff" stroke="#fff" strokeWidth=".6" /></svg>
          </TraySlot>
          <TraySlot $w={31}>
            <svg width="16" height="16" viewBox="0 0 16 16" fill="none" strokeWidth="1.200"><path d="M.6 15.500A15 15 0 0 1 15.500.6" stroke="#a5a5a7" /><path d="M4.500 15.500a11 11 0 0 1 11-10.500M8.300 15.500A7 7 0 0 1 15.500 9" stroke="#e5e5e7" /><circle cx="13.500" cy="13.800" r="1.700" fill="#fff" /></svg>
          </TraySlot>
          <TraySlot $w={28}>
            <svg width="20" height="18" viewBox="0 0 20 18" fill="none" stroke="#fff" strokeWidth="1.200"><path d="M.6 6.200h2.700L7.500 2v14l-4.200-4.200H.6z" /><path d="M10.500 6.500q1.500 2.500 0 5M13.200 4.500q3 4.500 0 9" /><path d="M16 1.500q6 7.500 0 15" stroke="#77777a" /></svg>
          </TraySlot>
          <Language>ENG</Language>
          <Clock><span>10:38 PM</span><span>28-03-2020</span></Clock>
          <TraySlot $w={61}>
            <svg width="20" height="20" viewBox="0 0 20 20" fill="none" stroke="#fff" strokeWidth="1.300"><path d="M.7.7h18.600v15H13l-3 3-3-3H.7z" /></svg>
          </TraySlot>
          <ShowDesktop />
        </Tray>
      </Taskbar>
    </Screen>
  );
}
